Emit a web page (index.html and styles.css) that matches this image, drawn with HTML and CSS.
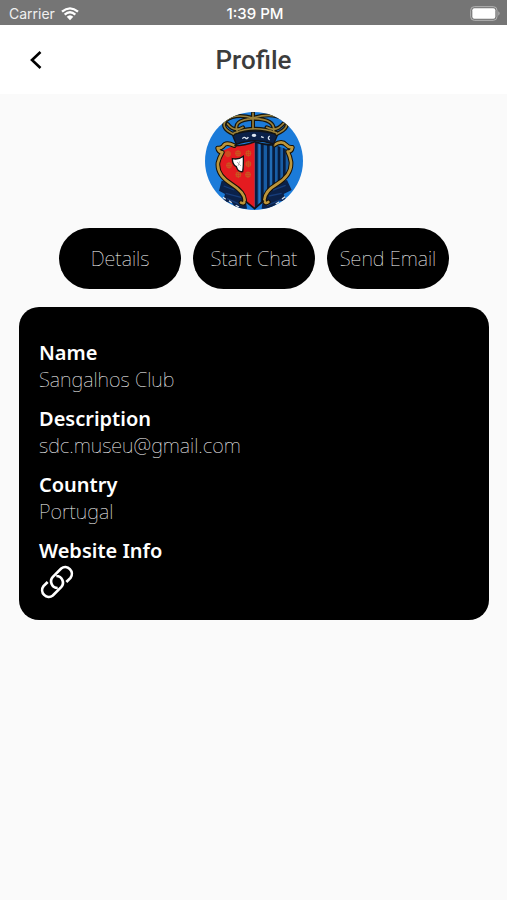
FILE: index.html
```html
<!DOCTYPE html>
<html lang="en">
<head>
<meta charset="utf-8">
<meta name="viewport" content="width=device-width, initial-scale=1">
<title>Profile</title>
<link rel="stylesheet" href="styles.css">
</head>
<body>
<div class="status">
  <div class="carrier"><span>Carrier</span>
    <svg class="wifi" viewBox="0 0 54 42" aria-hidden="true">
      <path d="M3 14Q27 -6 51 14M11 23Q27 9 43 23" fill="none" stroke="#fff" stroke-width="7"/>
      <path d="M17 29Q27 20 37 29L27 40Z" fill="#fff"/>
    </svg>
  </div>
  <span class="time">1:39 PM</span>
  <svg class="battery" viewBox="0 0 93 45" aria-hidden="true">
    <rect x="2" y="2" width="79" height="41" rx="11" fill="none" stroke="#b4b4b4" stroke-width="3"/>
    <rect x="7" y="7" width="69" height="31" rx="6" fill="#fff"/>
    <path d="M85 16Q93 22 85 29Z" fill="#b4b4b4"/>
  </svg>
</div>
<header class="header">
  <button class="back" aria-label="Back">
    <svg viewBox="0 0 14 20" aria-hidden="true"><path d="M11.500 2L3 10L11.500 18" fill="none" stroke="#000" stroke-width="2.600"/></svg>
  </button>
  <h1>Profile</h1>
</header>
<main>
  <svg class="avatar" viewBox="0 0 294 294" role="img" aria-label="Club crest">
    <defs>
      <clipPath id="disc"><circle cx="147" cy="147" r="147"/></clipPath>
      <clipPath id="shield"><path d="M88 100Q120 100 149 90Q180 100 208 98L244 112Q258 140 258 172Q246 200 212 216Q184 236 178 268L149 290L120 268Q114 236 84 216Q50 200 39 172Q38 140 54 116Z"/></clipPath>
    </defs>
    <g clip-path="url(#disc)">
      <rect width="294" height="294" fill="#1b7bd9"/>
      <path d="M50 206L92 214L120 250L126 290H92L82 274L54 268L60 246L42 236ZM246 204L206 214L176 240L170 290H206L220 268L244 266L236 246L260 234Z" fill="#0b2149"/>
      <path d="M56 222L88 234M62 244L108 256M66 260L112 280M242 220L204 234M230 244L192 252M236 260L186 280" stroke="#173c79" stroke-width="4"/>
      <path d="M54 256l8 6M72 266l8 6M92 280l10 5M240 254l-9 7M222 270l-10 6" stroke="#dce6f2" stroke-width="4"/>
      <g clip-path="url(#shield)">
        <rect x="36" y="85" width="114" height="209" fill="#e41b20"/>
        <rect x="149" y="85" width="112" height="209" fill="#185da5"/>
        <path d="M154 85V294M172 85V294M190 85V294M206 85V294M222 85V294M238 85V294" stroke="#071d40" stroke-width="8"/>
        <path d="M163 85V294M198 85V294" stroke="#2a7fc9" stroke-width="3"/>
        <g fill="none" stroke="#c75b20" stroke-width="3">
          <path id="motif" d="M63 120h12v12H63zM69 116v20M60 126h18"/>
          <use href="#motif" x="30" y="-2"/><use href="#motif" x="61" y="-2"/>
          <use href="#motif" x="61" y="30"/><use href="#motif" x="3" y="34"/>
          <use href="#motif" x="31" y="62"/><use href="#motif" x="60" y="62"/>
        </g>
      </g>
      <path d="M82 140Q101 144 115 133Q116 162 113 179Q99 181 94 164Q82 158 82 140Z" fill="#fff" stroke="#111" stroke-width="4"/>
      <path d="M96 150l12 12M104 148l-5 14" stroke="#999" stroke-width="2"/>
      <g fill="none" stroke-linecap="round" stroke-linejoin="round">
        <path id="frame" d="M88 101Q62 88 54 103Q47 110 38 108Q40 120 52 121Q42 138 39 152C36 178 52 200 80 217C104 232 118 246 119 264Q119 278 108 272M208 99Q230 84 244 99Q252 108 262 106Q260 119 248 119Q255 132 258 150C260 178 244 199 216 216C192 230 179 246 178 264Q180 278 190 270" stroke="#161006" stroke-width="14"/>
        <path d="M88 101Q62 88 54 103Q47 110 38 108Q40 120 52 121Q42 138 39 152C36 178 52 200 80 217C104 232 118 246 119 264Q119 278 108 272M208 99Q230 84 244 99Q252 108 262 106Q260 119 248 119Q255 132 258 150C260 178 244 199 216 216C192 230 179 246 178 264Q180 278 190 270" stroke="#bd963b" stroke-width="8"/>
      </g>
      <path d="M88 101Q120 101 149 89Q180 100 208 99M122 268L149 290L176 266" fill="none" stroke="#11131a" stroke-width="5"/>
      <path d="M82 68Q147 46 218 68L206 96Q147 76 94 97Z" fill="#0b2149" stroke="#11131a" stroke-width="4"/>
      <path d="M112 80q6-7 10-2t8-3M194 72q-8 6 0 12M168 74l8 3" fill="none" stroke="#dce6f2" stroke-width="4"/>
      <ellipse cx="147" cy="70" rx="7" ry="5" fill="#dce6f2"/>
      <g fill="none" stroke-linecap="round">
        <path d="M85 66Q46 48 62 26Q91 3 144 18Q203 0 236 22Q262 44 215 66M98 60Q80 24 143 20Q213 20 206 60M87 63Q149 38 214 62M144 3V51M68 36Q88 62 114 46M236 34Q214 62 185 46" stroke="#15150f" stroke-width="12"/>
        <path d="M85 66Q46 48 62 26Q91 3 144 18Q203 0 236 22Q262 44 215 66M98 60Q80 24 143 20Q213 20 206 60M87 63Q149 38 214 62M144 3V51M68 36Q88 62 114 46M236 34Q214 62 185 46" stroke="#9b823b" stroke-width="5"/>
      </g>
    </g>
  </svg>
  <div class="actions">
    <button>Details</button>
    <button>Start Chat</button>
    <button>Send Email</button>
  </div>
  <section class="card">
    <dl>
      <div><dt>Name</dt><dd>Sangalhos Club</dd></div>
      <div><dt>Description</dt><dd>sdc.museu@gmail.com</dd></div>
      <div><dt>Country</dt><dd>Portugal</dd></div>
      <div><dt>Website Info</dt><dd><a href="#" aria-label="Open website">
        <svg viewBox="0 0 108 108" aria-hidden="true"><path d="M56 72A20 20 0 0 1 41.500 38.500L66.500 13.500A20 20 0 0 1 94.500 41.500L82 54M52 36A20 20 0 0 1 66.500 69.500L41.500 94.500A20 20 0 0 1 13.500 66.500L26 54" fill="none" stroke="#fff" stroke-width="8"/></svg>
      </a></dd></div>
    </dl>
  </section>
</main>
</body>
</html>
```
FILE: styles.css
```css
* { box-sizing: border-box; }

body {
  margin: 0;
  min-height: 100vh;
  background: #fafafa;
  font-family: "Noto Sans", sans-serif;
}

button { border: 0; padding: 0; font: inherit; cursor: pointer; }

.status {
  display: grid;
  grid-template-columns: 1fr auto 1fr;
  align-items: center;
  height: 25px;
  padding: 2px 6px 0 9px;
  background: #757575;
  color: #fff;
  font: 14px/20px Inter, sans-serif;
}

.carrier { display: flex; align-items: center; gap: 6px; color: #f0f0f0; }
.wifi { width: 18px; height: 14px; }
.time { font-size: 15px; font-weight: 500; }
.battery { width: 31px; height: 15px; justify-self: end; }

.header {
  display: grid;
  grid-template-columns: 72px 1fr 72px;
  align-items: center;
  height: 69px;
  background: #fff;
}

.back { display: grid; place-items: center; height: 48px; background: none; }
.back svg { width: 14px; height: 20px; }

h1 {
  margin: 0;
  color: #3c3c3c;
  font: 500 26px/36px Roboto, sans-serif;
  text-align: center;
}

main { padding: 18px 18px 18px 19px; }

.avatar { display: block; width: 98px; height: 98px; margin: 0 auto 18px; }

.actions { display: flex; justify-content: center; gap: 12px; margin-bottom: 18px; }

.actions button {
  flex: 0 1 122px;
  height: 61px;
  border-radius: 31px;
  background: #000;
  color: #fff;
  font-size: 20px;
  font-weight: 100;
  white-space: nowrap;
}

.card {
  padding: 32px 20px 20px;
  border-radius: 20px;
  background: #000;
  color: #fff;
}

dl { display: grid; gap: 12px; margin: 0; font-size: 20px; line-height: 27px; }
dt { font-weight: 600; }
dd { margin: 0; font-weight: 100; }
dd a { display: block; width: 36px; }
dd svg { display: block; width: 36px; height: 36px; }
```
